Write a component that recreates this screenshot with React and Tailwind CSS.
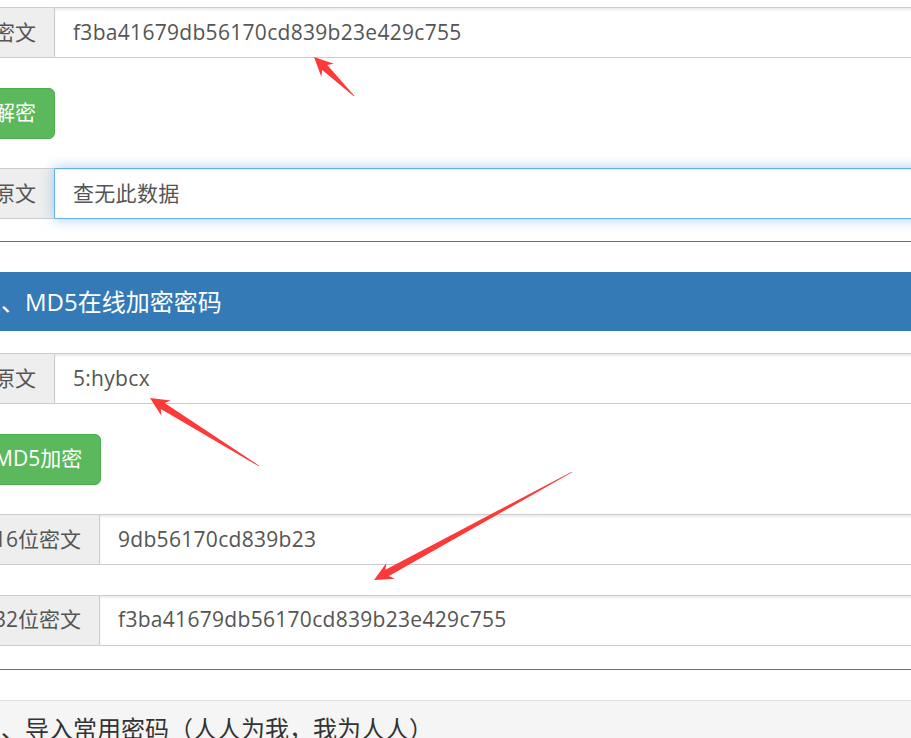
import React from 'react';

const font = { fontFamily: '"Open Sans", "Noto Sans CJK SC", sans-serif' };

// red annotation arrow, drawn from tail to tip
const Arrow = ({ tip, tail }) => {
  const [tx, ty] = tip;
  const [sx, sy] = tail;
  const dx = sx - tx;
  const dy = sy - ty;
  const len = Math.hypot(dx, dy);
  const ux = dx / len;
  const uy = dy / len;
  const nx = -uy;
  const ny = ux;
  const headLen = 19;
  const headW = 9;
  const neckW = 3.6;
  const bx = tx + ux * headLen;
  const by = ty + uy * headLen;
  const nkx = tx + ux * (headLen - 4);
  const nky = ty + uy * (headLen - 4);
  const pts = [
    [tx, ty],
    [bx + nx * headW, by + ny * headW],
    [nkx + nx * neckW, nky + ny * neckW],
    [sx + nx * 0.4, sy + ny * 0.4],
    [sx - nx * 0.4, sy - ny * 0.4],
    [nkx - nx * neckW, nky - ny * neckW],
    [bx - nx * headW, by - ny * headW],
  ];
  return <polygon points={pts.map(p => p.join(',')).join(' ')} fill="#fd3a3a" />;
};

const InputRow = ({ label, value, focused }) => (
  <div className="flex h-[51px] w-full">
    <span className="flex items-center px-[18px] bg-[#eeeeee] border border-[#cccccc] border-r-0 rounded-l-[6px] text-[21px] text-[#555555] whitespace-nowrap">
      {label}
    </span>
    <div
      className={
        focused
          ? 'flex-1 flex items-center px-[18px] border border-[#66afe9] rounded-r-[6px] text-[21px] tracking-[0.3px] text-[#555555] shadow-[inset_0_1px_1px_rgba(0,0,0,0.075),0_0_14px_rgba(102,175,233,0.6)]'
          : 'flex-1 flex items-center px-[18px] border border-[#cccccc] rounded-r-[6px] text-[21px] tracking-[0.3px] text-[#555555] shadow-[inset_0_2px_2px_rgba(0,0,0,0.075)]'
      }
    >
      {value}
    </div>
  </div>
);

const GreenButton = ({ children }) => (
  <div className="flex">
    <button className="h-[51px] px-[18px] bg-[#5cb85c] border border-[#4cae4c] rounded-[6px] text-white text-[21px]">
      {children}
    </button>
  </div>
);

export default function App() {
  return (
    <div className="relative w-[911px] h-[738px] overflow-hidden bg-white" style={font}>
      <div className="-ml-[48px] -mt-[16px] w-[1100px]">
        {/* decrypt panel */}
        <div className="border border-[#337ab7] rounded-[6px] mb-[30px]">
          <div className="px-[22px] pt-[22px] pb-[22px] flex flex-col gap-[29.5px]">
            <InputRow label="密文" value="f3ba41679db56170cd839b23e429c755" />
            <GreenButton>解密</GreenButton>
            <InputRow label="原文" value="查无此数据" focused />
          </div>
        </div>

        {/* encrypt panel */}
        <div className="border border-[#337ab7] rounded-[6px] mb-[30px]">
          <div className="h-[58px] flex items-center px-[24px] bg-[#337ab7] text-white text-[24px] leading-[1.1]">
            二、MD5在线加密密码
          </div>
          <div className="px-[22px] pt-[22px] pb-[23px] flex flex-col gap-[29.5px]">
            <InputRow label="原文" value="5:hybcx" />
            <GreenButton>MD5加密</GreenButton>
            <InputRow label="16位密文" value="9db56170cd839b23" />
            <InputRow label="32位密文" value="f3ba41679db56170cd839b23e429c755" />
          </div>
        </div>

        {/* common passwords panel */}
        <div className="border border-[#dddddd] rounded-[6px]">
          <div className="h-[58px] flex items-center px-[24px] bg-[#f5f5f5] text-[#333333] text-[24px] leading-[1.1]">
            三、导入常用密码（人人为我，我为人人）
          </div>
        </div>
      </div>

      <svg className="absolute inset-0 pointer-events-none" width="911" height="738">
        <Arrow tip={[314, 57]} tail={[354, 96]} />
        <Arrow tip={[150, 398]} tail={[259, 466]} />
        <Arrow tip={[374, 580]} tail={[572, 472]} />
      </svg>
    </div>
  );
}
